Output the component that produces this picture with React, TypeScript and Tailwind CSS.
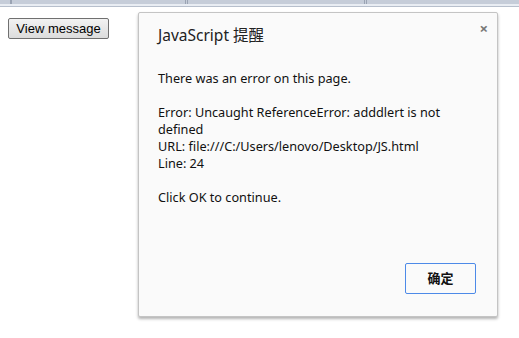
import React from "react";

export default function App() {
  const font = { fontFamily: '"Noto Sans", "Noto Sans CJK SC", sans-serif' };
  return (
    <div className="relative w-[519px] h-[338px] bg-white overflow-hidden">
      {/* top toolbar strip */}
      <div className="flex flex-col">
        <div className="h-[4px] bg-[#c6cdd9] flex">
          <div className="w-[10px]" />
          <div className="w-[2px] bg-[#9aa3b3]" />
          <div className="w-[173px]" />
          <div className="w-[1px] bg-[#9aa3b3]" />
          <div className="w-[1px]" />
          <div className="w-[1px] bg-[#9aa3b3]" />
          <div className="w-[176px]" />
          <div className="w-[1px] bg-[#9aa3b3]" />
          <div className="w-[1px]" />
          <div className="w-[1px] bg-[#9aa3b3]" />
        </div>
        <div className="h-[2px] bg-[#e9edf3]" />
        <div className="h-[1px] bg-[#b7bfcc]" />
      </div>

      {/* page button */}
      <div className="pl-[8px] pt-[8px]">
        <button
          className="h-[21px] w-[101px] border border-[#707070] rounded-[2px] bg-gradient-to-b from-[#f2f2f2] to-[#dcdcdc] text-[13px] leading-[19px] text-black"
          style={{ fontFamily: '"Liberation Sans", Arial, sans-serif' }}
        >
          View message
        </button>
      </div>

      {/* dialog */}
      <div
        className="absolute left-[138px] top-[12px] w-[360px] h-[305px] bg-[#fafafa] border border-[#c4c4c4] rounded-[2px] shadow-[0_2px_3px_rgba(0,0,0,0.3)] text-[#222]"
        style={font}
      >
        <div className="flex items-start justify-between pl-[19px] pr-[9px] pt-[12px]">
          <div className="text-[15.5px] leading-[20px] text-[#222]">JavaScript 提醒</div>
          <div className="text-[15px] leading-[12px] font-bold text-[#777] -mt-[3px]">×</div>
        </div>
        <div className="pl-[19px] pr-[20px] pt-[25px] text-[12.7px] leading-[17px] text-[#111]">
          <div>There was an error on this page.</div>
          <div className="h-[17px]" />
          <div>Error: Uncaught ReferenceError: adddlert is not defined</div>
          <div>URL: file:///C:/Users/lenovo/Desktop/JS.html</div>
          <div>Line: 24</div>
          <div className="h-[17px]" />
          <div>Click OK to continue.</div>
        </div>
        <div className="absolute right-[21px] bottom-[22px]">
          <button className="w-[71px] h-[31px] border border-[#4d8ae8] rounded-[2px] bg-[#fafafa] text-[13px] font-bold text-[#111]">
            确定
          </button>
        </div>
      </div>
    </div>
  );
}
